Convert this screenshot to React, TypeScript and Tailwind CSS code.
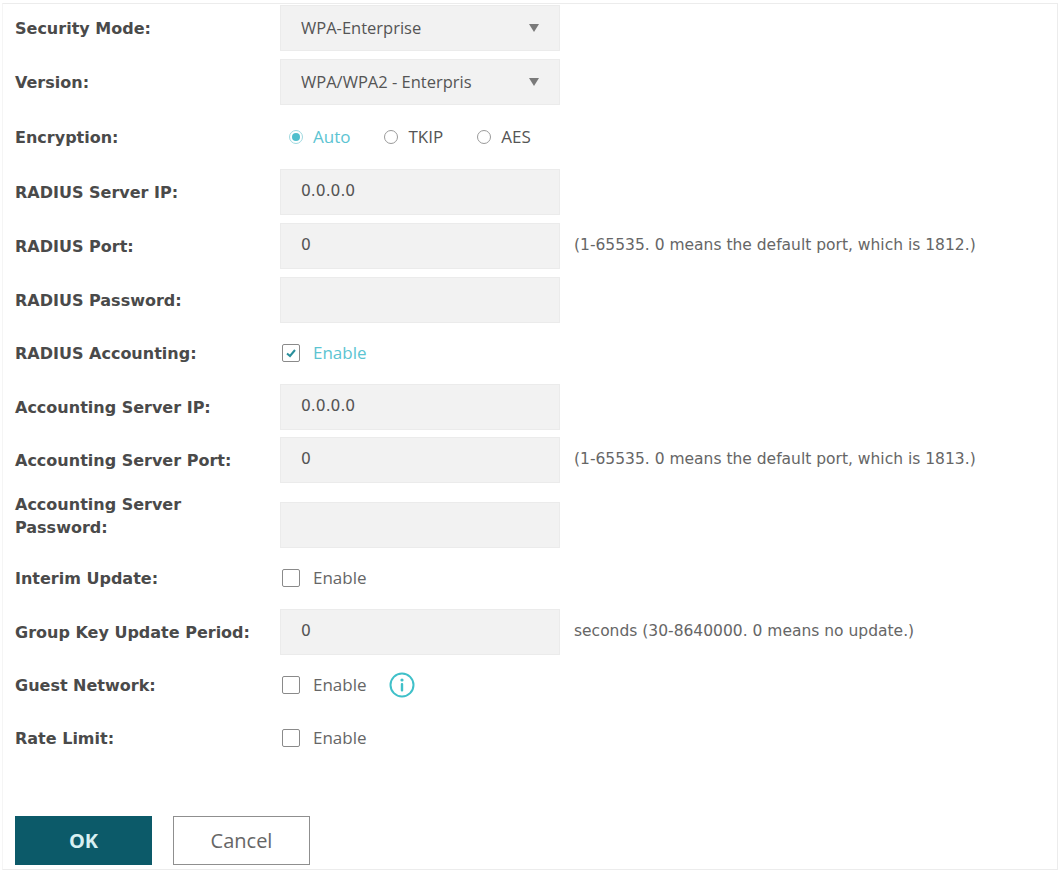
import React from 'react';

const labelCls = "w-[265px] shrink-0 font-['DejaVu_Sans',sans-serif] font-bold text-[16px] text-[#4a4a4a] leading-[23px]";
const boxCls = "w-[280px] h-[46px] shrink-0 bg-[#f2f2f2] border border-[#ebebeb] flex items-center px-[20px]";
const hintCls = "ml-[14px] font-['DejaVu_Sans',sans-serif] text-[15.5px] text-[#666]";
const optCls = "font-['Open_Sans',sans-serif] text-[17px]";

function Box({ value, mono = true }: { value?: string; mono?: boolean }) {
  return (
    <div className={boxCls}>
      <span className={mono ? "font-['DejaVu_Sans',sans-serif] text-[15.5px] text-[#555]" : "font-['Open_Sans',sans-serif] text-[16.5px] text-[#555]"}>
        {value}
      </span>
    </div>
  );
}

function Select({ value }: { value: string }) {
  return (
    <div className={boxCls + ' justify-between pr-[20px]'}>
      <span className="font-['Open_Sans',sans-serif] text-[16.5px] text-[#555] whitespace-nowrap overflow-hidden">{value}</span>
      <span className="ml-2 w-0 h-0 border-l-[5px] border-r-[5px] border-t-[8px] border-l-transparent border-r-transparent border-t-[#7a7a7a]" />
    </div>
  );
}

function Check({ checked, label }: { checked?: boolean; label: string }) {
  return (
    <div className="flex items-center ml-[2px]">
      <span className="w-[18px] h-[18px] border-[1.5px] border-[#8a8a8a] rounded-[2px] flex items-center justify-center bg-white">
        {checked && (
          <svg width="12" height="12" viewBox="0 0 12 12">
            <path d="M2 6.5 L5 9 L10 3" fill="none" stroke="#2a8f9c" strokeWidth="2" />
          </svg>
        )}
      </span>
      <span className={optCls + ' ml-[13px] ' + (checked ? 'text-[#5cc4d2]' : 'text-[#666]')}>{label}</span>
    </div>
  );
}

function Radio({ checked, label }: { checked?: boolean; label: string }) {
  return (
    <div className="flex items-center">
      <span className={'w-[14px] h-[14px] rounded-full border flex items-center justify-center ' + (checked ? 'border-[#9fd9e0]' : 'border-[#9a9a9a]')}>
        {checked && <span className="w-[8px] h-[8px] rounded-full bg-[#4fbfcd]" />}
      </span>
      <span className={optCls + ' ml-[10px] ' + (checked ? 'text-[#5cc4d2]' : 'text-[#555]')}>{label}</span>
    </div>
  );
}

function Row({ label, children, className = '' }: { label: React.ReactNode; children: React.ReactNode; className?: string }) {
  return (
    <div className={'flex items-center h-[46px] ' + className}>
      <div className={labelCls}>{label}</div>
      {children}
    </div>
  );
}

export default function App() {
  return (
    <div className="w-[1062px] h-[876px] bg-white pt-[3px] pl-[2px]">
      <div className="w-[1056px] h-[867px] border border-[#ececec] border-l-[#f5f5f5] pl-[12px] pt-[1px]">
        <Row label="Security Mode:" className="mt-[0px]">
          <Select value="WPA-Enterprise" />
        </Row>
        <Row label="Version:" className="mt-[8px]">
          <Select value="WPA/WPA2 - Enterpris" />
        </Row>
        <Row label="Encryption:" className="mt-[9px]">
          <div className="flex items-center gap-[34px] ml-[9px]">
            <Radio checked label="Auto" />
            <Radio label="TKIP" />
            <Radio label="AES" />
          </div>
        </Row>
        <Row label="RADIUS Server IP:" className="mt-[9px]">
          <Box value="0.0.0.0" />
        </Row>
        <Row label="RADIUS Port:" className="mt-[8px]">
          <Box value="0" />
          <span className={hintCls}>(1-65535. 0 means the default port, which is 1812.)</span>
        </Row>
        <Row label="RADIUS Password:" className="mt-[8px]">
          <Box />
        </Row>
        <Row label="RADIUS Accounting:" className="mt-[7px]">
          <Check checked label="Enable" />
        </Row>
        <Row label="Accounting Server IP:" className="mt-[8px]">
          <Box value="0.0.0.0" />
        </Row>
        <Row label="Accounting Server Port:" className="mt-[7px]">
          <Box value="0" />
          <span className={hintCls}>(1-65535. 0 means the default port, which is 1813.)</span>
        </Row>
        <div className="flex items-start mt-[10px] h-[55px]">
          <div className={labelCls}>
            Accounting Server
            <br />
            Password:
          </div>
          <div className="mt-[9px]">
            <Box />
          </div>
        </div>
        <Row label="Interim Update:" className="mt-[7px]">
          <Check label="Enable" />
        </Row>
        <Row label="Group Key Update Period:" className="mt-[8px]">
          <Box value="0" />
          <span className={hintCls}>seconds (30-8640000. 0 means no update.)</span>
        </Row>
        <Row label="Guest Network:" className="mt-[7px]">
          <Check label="Enable" />
          <svg className="ml-[22px]" width="26" height="26" viewBox="0 0 26 26">
            <circle cx="13" cy="13" r="11.5" fill="none" stroke="#3fc0c9" strokeWidth="2" />
            <circle cx="13" cy="8" r="1.6" fill="#3fc0c9" />
            <rect x="11.8" y="11" width="2.4" height="8.5" rx="1" fill="#3fc0c9" />
          </svg>
        </Row>
        <Row label="Rate Limit:" className="mt-[7px]">
          <Check label="Enable" />
        </Row>
        <div className="flex gap-[21px] mt-[55px]">
          <button className="w-[137px] h-[49px] bg-[#0c5a69] text-[#d8f0f2] font-['Open_Sans',sans-serif] font-bold text-[20px]">
            OK
          </button>
          <button className="w-[137px] h-[49px] bg-white border border-[#8f8f8f] text-[#666] font-['Open_Sans',sans-serif] text-[20px]">
            Cancel
          </button>
        </div>
      </div>
    </div>
  );
}
